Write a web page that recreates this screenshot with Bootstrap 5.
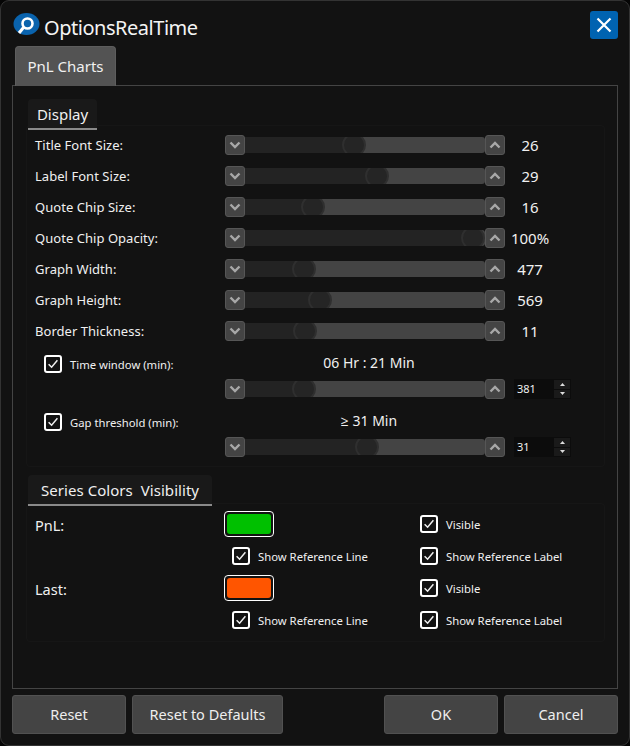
<!DOCTYPE html>
<html lang="en">
<head>
<meta charset="utf-8">
<title>OptionsRealTime</title>
<link href="https://cdn.jsdelivr.net/npm/bootstrap@5.3.0/dist/css/bootstrap.min.css" rel="stylesheet">
<style>
html,body{height:100%;margin:0;background:#050505;}
body{font-family:"Noto Sans","Open Sans",sans-serif;color:#f0f0f0;font-size:13px;overflow:hidden;}
.dlg{width:630px;height:746px;background:#121212;border:1px solid #333;border-radius:9px;padding:10px 11px 11px;}
.title-row{height:28px;}
.app-title{font-size:20px;line-height:28px;margin-left:4px;color:#f4f4f4;letter-spacing:-.47px;padding-top:5px;}
.app-ico{margin-left:1px;display:block;}
.close-x{width:28px;height:28px;padding:0;background:#0063b1;border:0;border-radius:3px;display:flex;align-items:center;justify-content:center;}
.tabstrip{margin-top:7px;padding-left:3px;height:40px;margin-bottom:-1px;position:relative;z-index:2;}
.tabitem{width:101px;height:40px;background:#535353;border:1px solid #5d5d5d;border-bottom:0;border-radius:4px 4px 0 0;font-size:15px;line-height:38px;text-align:center;color:#f0f0f0;}
.pane{height:604px;border:1px solid #444;padding:13px 12px 0 13px;}
.ghead{height:31px;display:inline-flex;align-items:center;background:#191919;border-bottom:2px solid #8a8a8a;border-radius:4px 4px 0 0;font-size:15px;color:#f0f0f0;margin-left:2px;position:relative;z-index:1;vertical-align:top;padding-top:2px;}
.ghead-a{width:69px;justify-content:center;margin-bottom:-5px;}
.ghead-b{width:184px;padding-left:13px;margin-top:8px;margin-bottom:-3px;white-space:pre;letter-spacing:.05px;}
.gbox{border:1px solid #161616;border-radius:4px;}
.gbox-a{height:342px;padding-top:3px;}
.gbox-b{height:139px;padding-top:4px;}
.srow{height:31px;}
.lbl{width:198px;padding-left:8px;flex:none;white-space:nowrap;padding-top:3px;letter-spacing:.04px;}
.slider{width:280px;height:20px;flex:none;}
.stepbtn{width:20px;height:20px;flex:none;background:#444;border:1px solid #565656;border-radius:3px;padding:0;display:flex;align-items:center;justify-content:center;}
.trk{flex:1;height:16px;background:#444;position:relative;overflow:hidden;border-radius:0 3px 3px 0;}
.trk-fill{height:100%;background:#232323;}
.knob{position:absolute;top:-4px;width:24px;height:24px;margin-left:-12px;border-radius:50%;background:#252525;border:2px solid #2f2f2f;}
.val{width:50px;text-align:center;font-size:15px;flex:none;padding-top:2px;}
.lbl-check{font-size:11.3px;white-space:nowrap;padding-top:3px;}
.cb{width:18px;height:18px;flex:none;appearance:none;background-color:#121212;border:2px solid #fff;border-radius:3px;margin:0;
background-image:url("data:image/svg+xml,%3Csvg xmlns='http://www.w3.org/2000/svg' viewBox='0 0 14 14'%3E%3Cpath fill='none' stroke='%23eee' stroke-width='1.5' d='M2.6 7.2l3 3 5.8-7'/%3E%3C/svg%3E");background-size:100% 100%;}
.chk-line{gap:8px;}
.lim-lbl{width:198px;flex:none;padding-left:17px;}
.lim-head{height:22px;}
.lim-head-a{margin-top:7px;}
.lim-head-b{margin-top:12px;}
.lim-text{width:280px;padding-left:8px;padding-bottom:3px;text-align:center;font-size:14px;}
.lim-slider{margin-top:4px;height:20px;padding-left:198px;}
.spin{width:57px;height:20px;margin-left:9px;background:#0c0c0c;font-size:11px;padding-left:3px;flex:none;}
.spin-arrows{width:16px;height:18px;margin-right:1px;gap:1px;}
.spin-arrows span{flex:1;background:#1a1a1a;display:flex;align-items:center;justify-content:center;padding-top:0;}
.crow{height:32px;}
.col-a{width:197px;padding-left:8px;padding-top:3px;flex:none;font-size:14.5px;}
.col-b{width:196px;flex:none;padding-top:0;}
.col-b-in{padding-left:8px;}
.swatch{width:50px;height:26px;border:1px solid #fff;border-radius:4px;padding:2px;background:#121212;}
.swatch i{display:block;width:100%;height:100%;border-radius:3px;}
.swatch-g i{background:#00c000;}
.swatch-o i{background:#ff5500;}
.foot{margin-top:6px;height:39px;}
.fgap{gap:6px;}
.fbtn{height:39px;background:#444;border:1px solid #515151;border-radius:3px;color:#eee;font-size:14.5px;padding:0;}
.fbtn-s{width:114px;}
.fbtn-l{width:151px;}
</style>
</head>
<body>
<div class="dlg">
  <div class="title-row d-flex align-items-center justify-content-between">
    <div class="d-flex align-items-center">
      <svg class="app-ico" width="27" height="26" viewBox="0 0 27 26"><ellipse cx="13.5" cy="12" rx="13" ry="11" fill="#0a63ad"/><path d="M4 20l3-6 6 6z" fill="#0a63ad"/><circle cx="14.5" cy="11.5" r="5" fill="none" stroke="#fff" stroke-width="2.6"/><path d="M10.5 15.5L6 21" stroke="#fff" stroke-width="3"/></svg>
      <span class="app-title">OptionsRealTime</span>
    </div>
    <button class="close-x" type="button" aria-label="Close"><svg width="16" height="16" viewBox="0 0 16 16"><path d="M1.5 1.5l13 13M14.5 1.5l-13 13" stroke="#fff" stroke-width="2.2" fill="none"/></svg></button>
  </div>
  <div class="tabstrip d-flex"><div class="tabitem">PnL Charts</div></div>
  <div class="pane">
    <div class="ghead ghead-a">Display</div>
    <div class="gbox gbox-a" id="disp"></div>
    <div class="ghead ghead-b">Series Colors  Visibility</div>
    <div class="gbox gbox-b">
      <div class="crow d-flex align-items-center">
        <div class="col-a">PnL:</div>
        <div class="col-b"><div class="swatch swatch-g"><i></i></div></div>
        <div class="d-flex align-items-center chk-line"><input class="cb" type="checkbox" checked><span class="lbl-check">Visible</span></div>
      </div>
      <div class="crow d-flex align-items-center">
        <div class="col-a"></div>
        <div class="col-b"><div class="col-b-in d-flex align-items-center chk-line"><input class="cb" type="checkbox" checked><span class="lbl-check">Show Reference Line</span></div></div>
        <div class="d-flex align-items-center chk-line"><input class="cb" type="checkbox" checked><span class="lbl-check">Show Reference Label</span></div>
      </div>
      <div class="crow d-flex align-items-center">
        <div class="col-a">Last:</div>
        <div class="col-b"><div class="swatch swatch-o"><i></i></div></div>
        <div class="d-flex align-items-center chk-line"><input class="cb" type="checkbox" checked><span class="lbl-check">Visible</span></div>
      </div>
      <div class="crow d-flex align-items-center">
        <div class="col-a"></div>
        <div class="col-b"><div class="col-b-in d-flex align-items-center chk-line"><input class="cb" type="checkbox" checked><span class="lbl-check">Show Reference Line</span></div></div>
        <div class="d-flex align-items-center chk-line"><input class="cb" type="checkbox" checked><span class="lbl-check">Show Reference Label</span></div>
      </div>
    </div>
  </div>
  <div class="foot d-flex justify-content-between">
    <div class="d-flex fgap"><button class="btn fbtn fbtn-s" type="button">Reset</button><button class="btn fbtn fbtn-l" type="button">Reset to Defaults</button></div>
    <div class="d-flex fgap"><button class="btn fbtn fbtn-s" type="button">OK</button><button class="btn fbtn fbtn-s" type="button">Cancel</button></div>
  </div>
</div>
<script>
var dn='<svg width="12" height="8" viewBox="0 0 12 8"><path d="M1.5 1.5L6 6l4.5-4.5" fill="none" stroke="#a8a8a8" stroke-width="2.4"/></svg>';
var up='<svg width="12" height="8" viewBox="0 0 12 8"><path d="M1.5 6.5L6 2l4.5 4.5" fill="none" stroke="#a8a8a8" stroke-width="2.4"/></svg>';
function slider(x){return '<div class="slider d-flex align-items-center"><button class="stepbtn" type="button">'+dn+'</button><div class="trk"><div class="trk-fill" style="width:'+(x-245)+'px"></div><div class="knob" style="left:'+(x-245)+'px"></div></div><button class="stepbtn" type="button">'+up+'</button></div>';}
var rows=[["Title Font Size:",354,"26"],["Label Font Size:",377,"29"],["Quote Chip Size:",313,"16"],["Quote Chip Opacity:",473,"100%"],["Graph Width:",304,"477"],["Graph Height:",320,"569"],["Border Thickness:",305,"11"]];
var h='';
rows.forEach(function(r){h+='<div class="srow d-flex align-items-center"><div class="lbl">'+r[0]+'</div>'+slider(r[1])+'<div class="val">'+r[2]+'</div></div>';});
function spin(v){return '<div class="spin d-flex align-items-center justify-content-between"><span>'+v+'</span><div class="spin-arrows d-flex flex-column"><span><svg width="5" height="3" viewBox="0 0 5 3"><path d="M2.5 0L5 3H0z" fill="#ddd"/></svg></span><span><svg width="5" height="3" viewBox="0 0 5 3"><path d="M2.5 3L5 0H0z" fill="#ddd"/></svg></span></div></div>';}
function lim(cls,name,txt,x,v){return '<div class="lim-head d-flex align-items-center '+cls+'"><div class="lim-lbl d-flex align-items-center chk-line"><input class="cb" type="checkbox" checked><span class="lbl-check">'+name+'</span></div><div class="lim-text">'+txt+'</div></div><div class="lim-slider d-flex align-items-center">'+slider(x)+spin(v)+'</div>';}
h+=lim('lim-head-a','Time window (min):','06 Hr : 21 Min',304,'381');
h+=lim('lim-head-b','Gap threshold (min):','≥ 31 Min',367,'31');
document.getElementById('disp').innerHTML=h;
</script>
<script src="https://cdn.jsdelivr.net/npm/bootstrap@5.3.0/dist/js/bootstrap.bundle.min.js"></script>
</body>
</html>
